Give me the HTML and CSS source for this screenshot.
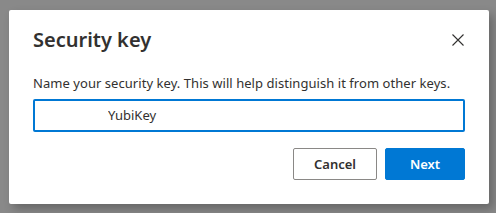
FILE: index.html
```html
<!DOCTYPE html>
<html>
<head>
  <meta charset="UTF-8">
  <title>Security key</title>
  <link rel="stylesheet" href="styles.css">
</head>
<body>
  <div class="dialog">
    <div class="dialog-header">
      <h1>Security key</h1>
      <button class="close-btn" aria-label="Close">
        <svg width="12" height="12" viewBox="0 0 12 12">
          <path d="M0.5 0.5 L11.5 11.5 M11.5 0.5 L0.5 11.5" stroke="#323130" stroke-width="1.1" fill="none"/>
        </svg>
      </button>
    </div>

    <p class="dialog-text">Name your security key. This will help distinguish it from other keys.</p>

    <input class="name-input" type="text" value="YubiKey">

    <div class="dialog-actions">
      <button class="btn btn-secondary">Cancel</button>
      <button class="btn btn-primary">Next</button>
    </div>
  </div>
</body>
</html>
```

FILE: styles.css
```css
body {
  margin: 0;
  padding: 10px 0 0 9px;
  width: 496px;
  height: 213px;
  box-sizing: border-box;
  background: #898989;
  font-family: "Segoe UI", "Noto Sans", sans-serif;
  color: #323130;
  overflow: hidden;
}

.dialog {
  width: 480px;
  height: 194px;
  box-sizing: border-box;
  background: white;
  border-radius: 2px;
  padding: 16px 24px 24px;
  box-shadow: 4px 5px 10px rgba(0, 0, 0, 0.25);
}

.dialog-header {
  display: flex;
  align-items: center;
  justify-content: space-between;
}

.dialog-header h1 {
  margin: 0;
  font-size: 20px;
  line-height: 28px;
  font-weight: 600;
}

.close-btn {
  border: none;
  background: none;
  padding: 0;
  width: 12px;
  height: 12px;
  display: flex;
  margin-right: 1px;
  cursor: pointer;
}

.dialog-text {
  margin: 19px 0 0;
  font-size: 13px;
  line-height: 20px;
  letter-spacing: 0.05px;
  white-space: nowrap;
}

.name-input {
  display: block;
  margin-top: 6px;
  width: 432px;
  height: 33px;
  box-sizing: border-box;
  border: 2px solid #0078d4;
  border-radius: 2px;
  padding: 0 8px 1px 73px;
  font-family: inherit;
  font-size: 13px;
  color: #323130;
  outline: none;
}

.dialog-actions {
  display: flex;
  justify-content: flex-end;
  gap: 8px;
  margin-top: 16px;
}

.btn {
  height: 32px;
  box-sizing: border-box;
  border-radius: 2px;
  font-family: inherit;
  font-size: 13px;
  font-weight: 600;
  cursor: pointer;
}

.btn-secondary {
  width: 84px;
  background: white;
  color: #323130;
  border: 1px solid #8a8886;
}

.btn-primary {
  width: 80px;
  background: #0078d4;
  color: white;
  border: 1px solid #0078d4;
}
```
